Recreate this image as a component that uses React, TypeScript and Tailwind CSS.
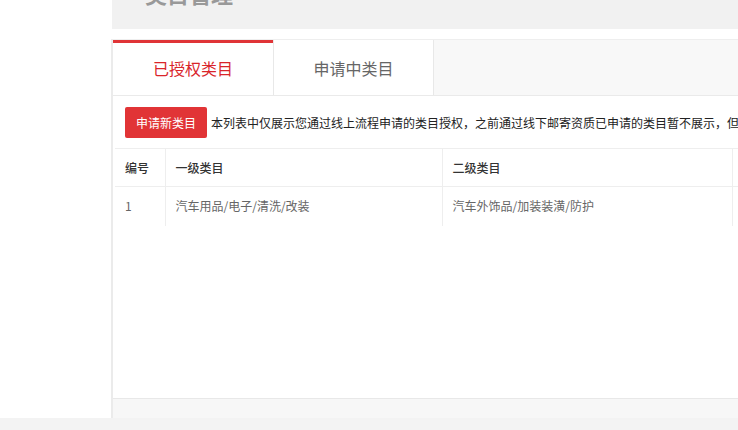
import React from 'react';

const font = { fontFamily: '"Noto Sans CJK SC", "Liberation Sans", sans-serif' };

const rows = [{ id: '1', first: '汽车用品/电子/清洗/改装', second: '汽车外饰品/加装装潢/防护' }];

export default function App() {
    return (
        <div className="flex h-[430px] w-[738px] flex-col overflow-hidden bg-white" style={font}>
            <div className="flex h-[418px]">
                <div className="w-[111px] shrink-0 bg-white" />
                <div className="flex min-w-0 flex-1 flex-col">
                    <div className="ml-px h-[29px] shrink-0 overflow-hidden bg-[#f1f1f1] pl-[33px]">
                        <div className="-mt-[22px] text-[22px] leading-[30px] font-bold text-[#999]">类目管理</div>
                    </div>
                    <div className="h-[10px] shrink-0" />
                    <div className="flex min-h-0 flex-1 flex-col border-l-2 border-[#ebebeb]">
                        <div className="flex h-[56px] shrink-0 border-t border-[#eeeeee] bg-[#f8f8f8]">
                            <div className="flex w-[160px] items-center justify-center border-t-[3px] border-[#e03437] bg-white pb-[3px] text-[16px] text-[#d9252a]">
                                已授权类目
                            </div>
                            <div className="flex w-[161px] items-center justify-center border-r border-l border-[#e8e8e8] bg-white text-[16px] text-[#666]">
                                申请中类目
                            </div>
                        </div>
                        <div className="flex min-h-0 flex-1 flex-col border-t border-[#eaeaea]">
                            <div className="flex h-[52px] items-center pt-px pl-[12px]">
                                <button className="h-[31px] w-[82px] shrink-0 rounded-[2px] bg-[#e13436] text-[12px] text-white">
                                    申请新类目
                                </button>
                                <span className="ml-[4px] text-[12px] whitespace-nowrap text-[#222]">
                                    本列表中仅展示您通过线上流程申请的类目授权，之前通过线下邮寄资质已申请的类目暂不展示，但
                                </span>
                            </div>
                            <div className="min-h-0 flex-1 overflow-hidden pl-[2px]">
                                <table className="w-[700px] table-fixed border-collapse text-left text-[12px]">
                                    <thead>
                                        <tr className="h-[38px] border-t border-[#eeeeee] text-[#333]">
                                            <th className="w-[50px] border-r border-[#eeeeee] pl-[10px] font-medium">编号</th>
                                            <th className="w-[277px] border-r border-[#eeeeee] pl-[10px] font-medium">一级类目</th>
                                            <th className="w-[290px] border-r border-[#eeeeee] pl-[10px] font-medium">二级类目</th>
                                            <th className="w-[83px]" />
                                        </tr>
                                    </thead>
                                    <tbody>
                                        {rows.map((r) => (
                                            <tr key={r.id} className="h-[39px] border-t border-[#eeeeee] text-[#666]">
                                                <td className="border-r border-[#eeeeee] pl-[10px]">{r.id}</td>
                                                <td className="border-r border-[#eeeeee] pl-[10px]">{r.first}</td>
                                                <td className="border-r border-[#eeeeee] pl-[10px]">{r.second}</td>
                                                <td />
                                            </tr>
                                        ))}
                                    </tbody>
                                </table>
                            </div>
                            <div className="h-[20px] shrink-0 border-t border-[#e8e8e8] bg-[#f7f7f7]" />
                        </div>
                    </div>
                </div>
            </div>
            <div className="h-[12px] bg-[#f3f3f3]" />
        </div>
    );
}
